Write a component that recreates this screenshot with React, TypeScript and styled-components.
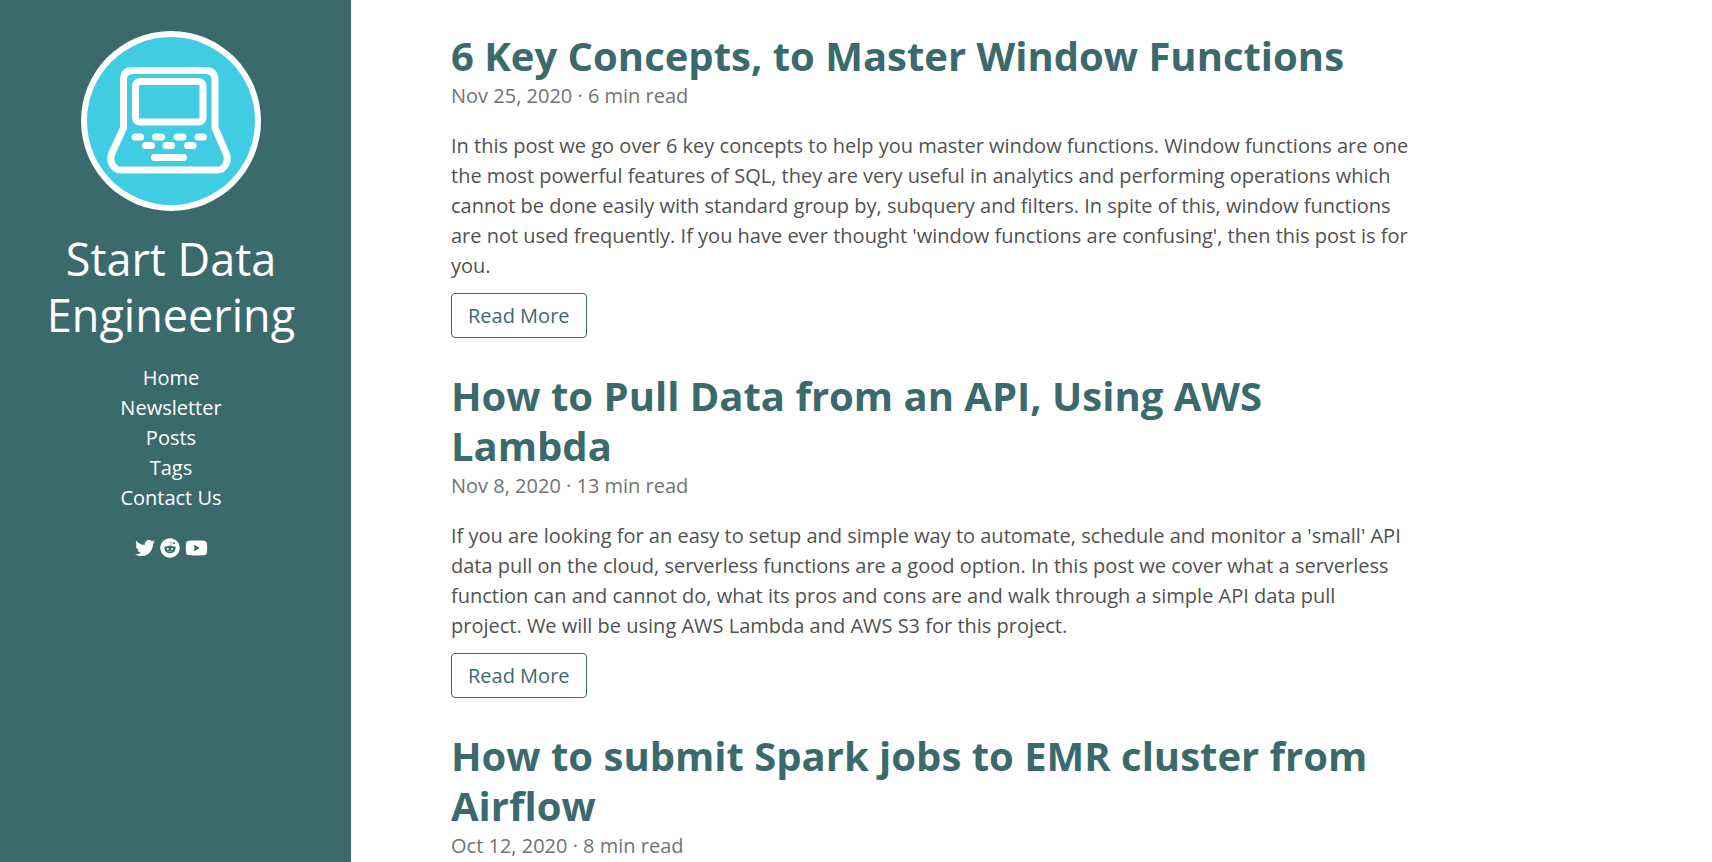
import React from "react";
import styled, { createGlobalStyle } from "styled-components";
import { FaReddit, FaTwitter, FaYoutube } from "react-icons/fa";

const TEAL = "#3b6a6d";

const GlobalStyle = createGlobalStyle`
  * {
    box-sizing: border-box;
  }
  body {
    margin: 0;
    background: #fff;
    color: #515151;
    font-family: "Open Sans", sans-serif;
    font-size: 20px;
    line-height: 30px;
  }
`;

const Page = styled.div`
  display: flex;
  min-height: 100vh;
`;

const Sidebar = styled.aside`
  flex: 0 0 351px;
  display: flex;
  flex-direction: column;
  align-items: center;
  gap: 20px;
  padding: 31px 29px 20px 20px;
  background: ${TEAL};
  color: #fff;
  text-align: center;
`;

const Avatar = styled.svg`
  display: block;
  width: 180px;
  height: 180px;
`;

const SiteTitle = styled.h1`
  margin: 0;
  font-size: 45px;
  font-weight: 400;
  line-height: 56px;
`;

const SidebarLink = styled.a`
  color: #fff;
  text-decoration: none;
`;

const Nav = styled.nav`
  display: flex;
  flex-direction: column;
  align-items: center;
`;

const Social = styled.div`
  display: flex;
  align-items: center;
  gap: 5px;
  height: 30px;
`;

const SocialLink = styled(SidebarLink)<{ $width: number }>`
  display: flex;

  svg {
    width: ${({ $width }) => $width}px;
    height: 20px;
  }
`;

const Content = styled.main`
  flex: 0 1 960px;
  display: flex;
  flex-direction: column;
  gap: 33px;
  margin: 0 40px 0 100px;
  padding-top: 31px;
`;

const Post = styled.article`
  flex: none;
`;

const PostTitle = styled.h2`
  margin: 0;
  font-size: 40px;
  font-weight: 700;
  line-height: 50px;
`;

const PostLink = styled.a`
  color: ${TEAL};
  text-decoration: none;
`;

const PostMeta = styled.div`
  color: #737373;
`;

const Summary = styled.p`
  margin: 20px 0 12px;
`;

const ReadMore = styled.a`
  display: block;
  width: fit-content;
  padding: 7px 16px 6px;
  border: 1px solid ${TEAL};
  border-radius: 4px;
  color: ${TEAL};
  text-decoration: none;
`;

const navItems = ["Home", "Newsletter", "Posts", "Tags", "Contact Us"];

const posts = [
  {
    title: "6 Key Concepts, to Master Window Functions",
    meta: "Nov 25, 2020 · 6 min read",
    summary:
      "In this post we go over 6 key concepts to help you master window functions. Window functions are one the most powerful features of SQL, they are very useful in analytics and performing operations which cannot be done easily with standard group by, subquery and filters. In spite of this, window functions are not used frequently. If you have ever thought 'window functions are confusing', then this post is for you.",
  },
  {
    title: "How to Pull Data from an API, Using AWS Lambda",
    meta: "Nov 8, 2020 · 13 min read",
    summary:
      "If you are looking for an easy to setup and simple way to automate, schedule and monitor a 'small' API data pull on the cloud, serverless functions are a good option. In this post we cover what a serverless function can and cannot do, what its pros and cons are and walk through a simple API data pull project. We will be using AWS Lambda and AWS S3 for this project.",
  },
  {
    title: "How to submit Spark jobs to EMR cluster from Airflow",
    meta: "Oct 12, 2020 · 8 min read",
    summary: "",
  },
];

function LaptopAvatar() {
  return (
    <Avatar viewBox="0 0 180 180" role="img" aria-label="Laptop">
      <circle cx="90" cy="90" r="90" fill="#fff" />
      <circle cx="90" cy="90" r="84" fill="#40cde4" />
      <g fill="none" stroke="#fff" strokeWidth="7" strokeLinejoin="round">
        <path d="M42.500 97V49q0-9.500 9.500-9.500H124.500q9.500 0 9.500 9.500V97L145 122c3.500 8-1 17-9 17H40c-8 0-12.500-9-9-17Z" />
        <rect x="54.500" y="50.500" width="67.500" height="40.500" rx="4.500" />
      </g>
      <g fill="#fff">
        <rect x="50.500" y="102.500" width="12.500" height="7" rx="3.500" />
        <rect x="71" y="102.500" width="13" height="7" rx="3.500" />
        <rect x="92.500" y="102.500" width="13" height="7" rx="3.500" />
        <rect x="113.500" y="102.500" width="12.500" height="7" rx="3.500" />
        <rect x="61" y="111" width="13" height="7" rx="3.500" />
        <rect x="81.500" y="111" width="12.500" height="7" rx="3.500" />
        <rect x="103" y="111" width="12.500" height="7" rx="3.500" />
        <rect x="70" y="123" width="36" height="7" rx="3.500" />
      </g>
    </Avatar>
  );
}

export default function App() {
  return (
    <>
      <GlobalStyle />
      <Page>
        <Sidebar>
          <LaptopAvatar />
          <SiteTitle>
            <SidebarLink href="#home">Start Data Engineering</SidebarLink>
          </SiteTitle>
          <Nav>
            {navItems.map((item) => (
              <SidebarLink key={item} href={"#" + item.toLowerCase().replace(" ", "-")}>
                {item}
              </SidebarLink>
            ))}
          </Nav>
          <Social>
            <SocialLink href="#twitter" aria-label="Twitter" $width={20}>
              <FaTwitter />
            </SocialLink>
            <SocialLink href="#reddit" aria-label="Reddit" $width={20}>
              <FaReddit />
            </SocialLink>
            <SocialLink href="#youtube" aria-label="YouTube" $width={23}>
              <FaYoutube />
            </SocialLink>
          </Social>
        </Sidebar>
        <Content>
          {posts.map((post, index) => (
            <Post key={post.title}>
              <PostTitle>
                <PostLink href={`#post-${index + 1}`}>{post.title}</PostLink>
              </PostTitle>
              <PostMeta>{post.meta}</PostMeta>
              {post.summary && (
                <>
                  <Summary>{post.summary}</Summary>
                  <ReadMore href={`#post-${index + 1}`}>Read More</ReadMore>
                </>
              )}
            </Post>
          ))}
        </Content>
      </Page>
    </>
  );
}
